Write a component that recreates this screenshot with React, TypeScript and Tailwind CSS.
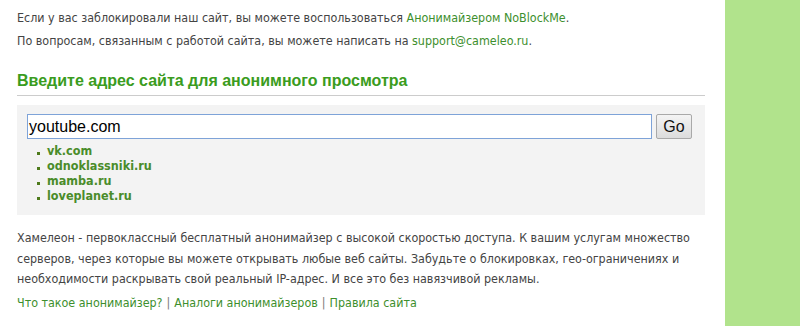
export default function App() {
  const body = { fontFamily: "'DejaVu Sans Condensed', 'DejaVu Sans', sans-serif" };
  const arial = { fontFamily: "'Liberation Sans', Arial, sans-serif" };
  const sites = ["vk.com", "odnoklassniki.ru", "mamba.ru", "loveplanet.ru"];
  return (
    <div className="flex h-[326px] w-[800px] overflow-hidden bg-white">
      <div className="w-[705px] shrink-0 pl-[17px]" style={body}>
        <div className="whitespace-nowrap pt-[6px] text-[12.4px] leading-[23px] text-[#444]">
          <p>
            Если у вас заблокировали наш сайт, вы можете воспользоваться{" "}
            <a className="text-[#3d8f2d]">Анонимайзером NoBlockMe</a>.
          </p>
          <p>
            По вопросам, связанным с работой сайта, вы можете написать на{" "}
            <a className="text-[#3d8f2d]">support@cameleo.ru</a>.
          </p>
        </div>
        <h2
          className="mt-[19px] border-b border-[#cccccc] pb-[4px] text-[16px] font-bold leading-[20px] text-[#3a9c20]"
          style={arial}
        >
          Введите адрес сайта для анонимного просмотра
        </h2>
        <div className="mt-[9px] h-[110px] bg-[#f3f3f3] px-[10px] pt-[9px]">
          <div className="flex gap-[4px]">
            <div
              className="flex h-[25px] w-[625px] items-center border border-[#7ea3d8] bg-white px-[1px] text-[16px] text-black"
              style={arial}
            >
              youtube.com
            </div>
            <div
              className="flex h-[25px] w-[36px] items-center justify-center rounded-[2px] border border-[#a9a9a9] bg-gradient-to-b from-[#f4f4f4] to-[#dcdcdc] text-[16px] text-[#111]"
              style={arial}
            >
              Go
            </div>
          </div>
          <ul className="mt-[4px] pl-[10px]">
            {sites.map((s) => (
              <li key={s} className="flex h-[15px] items-center gap-[7px]">
                <span className="mt-[5px] h-[3px] w-[3px] bg-[#4d7a1c]" />
                <span className="text-[12.5px] font-bold leading-[15px] text-[#4a8c2a]">{s}</span>
              </li>
            ))}
          </ul>
        </div>
        <p className="mt-[13px] whitespace-nowrap text-[12.4px] leading-[20.5px] text-[#444]">
          Хамелеон - первоклассный бесплатный анонимайзер с высокой скоростью доступа. К вашим услугам множество
          <br />
          серверов, через которые вы можете открывать любые веб сайты. Забудьте о блокировках, гео-ограничениях и
          <br />
          необходимости раскрывать свой реальный IP-адрес. И все это без навязчивой рекламы.
        </p>
        <div className="mt-[3px] whitespace-nowrap text-[12.4px] leading-[20px] text-[#777]">
          <a className="text-[#3d8f2d]">Что такое анонимайзер?</a>
          <span className="px-[4px]">|</span>
          <a className="text-[#3d8f2d]">Аналоги анонимайзеров</a>
          <span className="px-[4px]">|</span>
          <a className="text-[#3d8f2d]">Правила сайта</a>
        </div>
      </div>
      <div className="ml-[20px] flex-1 bg-[#b1e38c]" />
    </div>
  );
}
